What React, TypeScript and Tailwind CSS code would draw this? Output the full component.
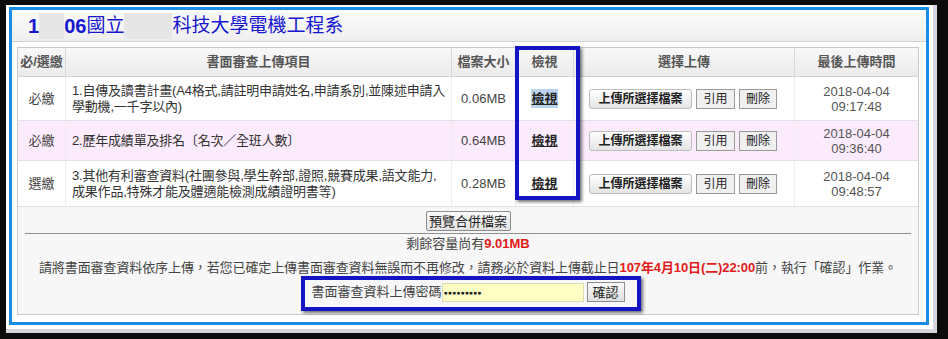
import React from "react";

const cols = "grid grid-cols-[48px_386px_64px_58px_221px_123px]";

function UploadButtons() {
  return (
    <div className="flex items-center gap-[4px] pl-[15px]">
      <button className="h-[20px] w-[103px] rounded-[3px] border border-[#bdbdbd] bg-gradient-to-b from-white to-[#e4e4e4] text-[12px] font-bold text-[#222] leading-none">
        上傳所選擇檔案
      </button>
      <button className="h-[20px] w-[39px] border border-[#9a9a9a] bg-[#f0f0f0] text-[12px] text-[#222] leading-none">
        引用
      </button>
      <button className="h-[20px] w-[38px] border border-[#9a9a9a] bg-[#f0f0f0] text-[12px] text-[#222] leading-none">
        刪除
      </button>
    </div>
  );
}

type Row = {
  kind: string;
  lines: string[];
  size: string;
  date: string;
  time: string;
  h: string;
  bg: string;
  selected?: boolean;
};

const rows: Row[] = [
  {
    kind: "必繳",
    lines: ["1.自傳及讀書計畫(A4格式,請註明申請姓名,申請系別,並陳述申請入", "學動機,一千字以內)"],
    size: "0.06MB",
    date: "2018-04-04",
    time: "09:17:48",
    h: "h-[44px]",
    bg: "bg-white",
    selected: true,
  },
  {
    kind: "必繳",
    lines: ["2.歷年成績單及排名〔名次／全班人數〕"],
    size: "0.64MB",
    date: "2018-04-04",
    time: "09:36:40",
    h: "h-[40px]",
    bg: "bg-[#fcebfc]",
  },
  {
    kind: "選繳",
    lines: ["3.其他有利審查資料(社團參與,學生幹部,證照,競賽成果,語文能力,", "成果作品,特殊才能及體適能檢測成績證明書等)"],
    size: "0.28MB",
    date: "2018-04-04",
    time: "09:48:57",
    h: "h-[46px]",
    bg: "bg-white",
  },
];

export default function App() {
  return (
    <div className="w-[948px] h-[339px] overflow-hidden bg-[#0b0b0b] pt-[5px] pl-[6px] pr-[11px] pb-[6px] font-['Liberation_Sans','Noto_Sans_CJK_TC',sans-serif]">
      <div className="h-full bg-white pl-[3px] pt-[2px] pr-[4px] pb-[4px] border-r-[4px] border-b-[4px] border-[#d8d4de]">
        <div className="h-full border-[3px] border-[#1b8ce3] bg-white flex flex-col">
          {/* title */}
          <div className="h-[32px] shrink-0 border-b border-[#d2d2d2] bg-gradient-to-b from-[#fdfdfd] to-[#eeeeee] flex items-center pl-[16px] text-[#1717d2]">
            <span className="text-[20px] font-bold leading-none">1</span>
            <span className="inline-block w-[25px] h-[26px] bg-[#e6e6e6]" />
            <span className="text-[20px] font-bold leading-none">06</span>
            <span className="text-[19px] leading-none">國立</span>
            <span className="inline-block w-[48px] h-[26px] bg-[#e6e6e6]" />
            <span className="text-[19px] leading-none">科技大學電機工程系</span>
          </div>

          <div className="flex-1 pt-[5px] pl-[5px] pr-[7px] pb-[7px]">
            <div className="relative h-full border border-[#c9c9c9] bg-[#f7f7f7] flex flex-col">
              {/* header */}
              <div className={`${cols} h-[29px] bg-gradient-to-b from-[#f8f8f8] to-[#ebebeb] border-b border-[#d3d3d3] text-[13px] font-bold text-[#555]`}>
                {["必/選繳", "書面審查上傳項目", "檔案大小", "檢視", "選擇上傳", "最後上傳時間"].map((t, i) => (
                  <div
                    key={t}
                    className={`flex items-center justify-center ${i < 5 ? "border-r border-[#d8d8d8]" : ""}`}
                  >
                    {t}
                  </div>
                ))}
              </div>

              {rows.map((r, idx) => (
                <div key={idx} className={`${cols} ${r.h} ${r.bg} border-b border-[#e2e2e2] text-[13px] text-[#444]`}>
                  <div className="flex items-center justify-center border-r border-[#ededed]">{r.kind}</div>
                  <div className="flex flex-col justify-center pl-[6px] leading-[16px] text-[#333] border-r border-[#ededed] tracking-[-0.2px]">
                    {r.lines.map((l) => (
                      <div key={l} className="whitespace-nowrap">
                        {l}
                      </div>
                    ))}
                  </div>
                  <div className="flex items-center justify-center border-r border-[#ededed]">{r.size}</div>
                  <div className="flex items-center justify-center border-r border-[#ededed]">
                    <span className={`font-bold underline text-[#222] ${r.selected ? "bg-[#bcd3ee]" : ""}`}>檢視</span>
                  </div>
                  <div className="flex items-center border-r border-[#ededed]">
                    <UploadButtons />
                  </div>
                  <div className="flex flex-col items-center justify-center leading-[15px] text-[#555]">
                    <span>{r.date}</span>
                    <span>{r.time}</span>
                  </div>
                </div>
              ))}

              {/* below table */}
              <div className="flex flex-col items-center">
                <button className="mt-[4px] h-[20px] w-[85px] rounded-[2px] border border-[#8c8c8c] bg-gradient-to-b from-[#fafafa] to-[#e3e3e3] text-[13px] text-[#222] leading-none">
                  預覽合併檔案
                </button>
                <div className="mt-[2px] self-stretch mx-[7px] border-t border-[#8f8f8f]" />
                <div className="h-[20px] flex items-center text-[13px] text-[#444]">
                  剩餘容量尚有<span className="font-bold text-[#e21a1a]">9.01MB</span>
                </div>
                <div className="mt-[4px] h-[20px] flex items-center text-[13px] text-[#444] whitespace-nowrap tracking-[-0.1px]">
                  請將書面審查資料依序上傳，若您已確定上傳書面審查資料無誤而不再修改，請務必於資料上傳截止日
                  <span className="font-bold text-[#e21a1a]">107年4月10日(二)22:00</span>
                  前，執行「確認」作業。
                </div>
                <div className="relative mt-[4px] h-[20px] flex items-center text-[13px] text-[#444]">
                  <span>書面審查資料上傳密碼</span>
                  <div className="h-[19px] w-[142px] bg-[#ffffc4] border border-[#dcdcb8] flex items-center pl-[1px]">
                    <span className="text-[7px] text-[#222] leading-none">●●●●●●●●●</span>
                  </div>
                  <button className="ml-[3px] h-[20px] w-[38px] border border-[#8c8c8c] bg-gradient-to-b from-[#fafafa] to-[#e0e0e0] text-[13px] text-[#222] leading-none">
                    確認
                  </button>
                  <div className="absolute left-[-10px] right-[-16px] top-[-6px] bottom-[-9px] border-[4px] border-[#1414c4] shadow-[2px_2px_3px_rgba(0,0,0,0.55)] pointer-events-none" />
                </div>
              </div>

              {/* highlight on 檢視 column */}
              <div className="absolute left-[497px] top-[-2px] w-[65px] h-[154px] border-[4px] border-[#1414c4] shadow-[2px_2px_3px_rgba(0,0,0,0.55)] pointer-events-none" />
            </div>
          </div>
        </div>
      </div>
    </div>
  );
}
